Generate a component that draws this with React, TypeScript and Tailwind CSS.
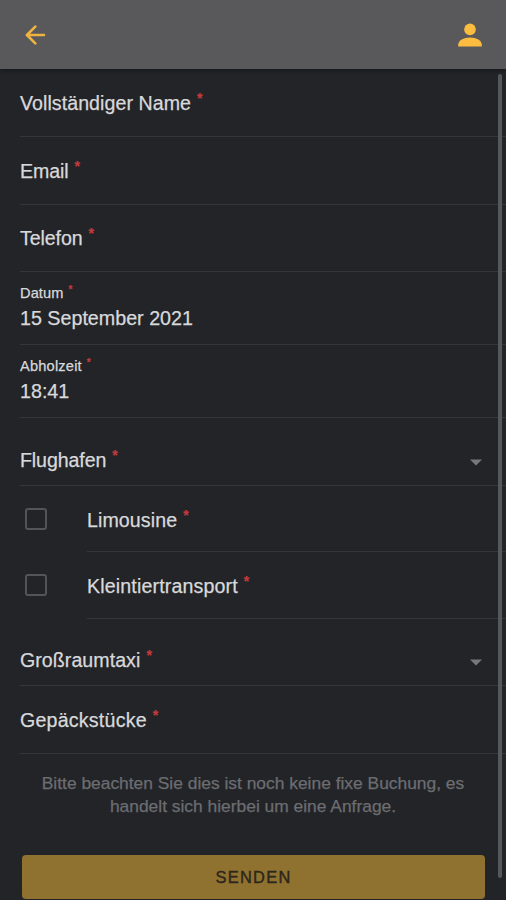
import React from 'react';
import clsx from 'clsx';

interface LabelProps {
  text: string;
  small?: boolean;
}

function Label({ text, small }: LabelProps) {
  return (
    <div className={clsx('flex whitespace-nowrap', small ? 'text-[14.6px] leading-4' : 'text-[19.6px] leading-6')}>
      {text}
      <span className={clsx('font-bold tracking-normal text-[#c23a3c]', small ? 'ml-[5px] text-[10px] leading-[10px]' : 'ml-1.5 text-[14px] leading-[15px]')}>*</span>
    </div>
  );
}

function TextRow({ label, className }: { label: string; className: string }) {
  return (
    <div className={clsx('ml-5 border-b border-[#35363a]', className)}>
      <Label text={label} />
    </div>
  );
}

function ValueRow({ label, value, className }: { label: string; value: string; className?: string }) {
  return (
    <div className="ml-5 h-[73px] border-b border-[#35363a] pt-[13px]">
      <div className={className}>
        <Label text={label} small />
      </div>
      <div className="mt-[5px] text-[19.7px] leading-6">{value}</div>
    </div>
  );
}

function SelectRow({ label, className }: { label: string; className: string }) {
  return (
    <div className={clsx('ml-5 flex justify-between border-b border-[#35363a] pr-6', className)}>
      <Label text={label} />
      <svg className="mt-[11px] h-[7px] w-3" viewBox="0 0 12 7" fill="#77787a">
        <path d="M0 .5h12l-6 6z" />
      </svg>
    </div>
  );
}

function CheckRow({ label, className }: { label: string; className: string }) {
  return (
    <div className={clsx('flex pl-[25px]', className)}>
      <div className="mt-[22px] h-[22px] w-[22px] shrink-0 rounded-[3px] border-2 border-[#535457]" />
      <div className="ml-10 flex-1 border-b border-[#35363a] pt-[22px]">
        <Label text={label} />
      </div>
    </div>
  );
}

export default function App() {
  return (
    <div className="relative flex h-[900px] w-full flex-col overflow-hidden bg-[#232428] font-['Liberation_Sans',Arial,sans-serif] text-[#d8d9db] [-webkit-text-stroke:0.25px]">
      {/* HEADER */}
      <header className="flex h-[69px] shrink-0 items-start justify-between bg-[#59595b] pr-6 pl-[25px] shadow-[0_1px_5px_rgba(0,0,0,0.45)]">
        <svg className="mt-[25px] h-5 w-[21px]" viewBox="0 0 21 20" fill="none" stroke="#efb340" strokeWidth="2.6" strokeLinecap="round" strokeLinejoin="round">
          <path d="M10.3 1.6L1.9 10l8.4 8.4M2.4 10H19" />
        </svg>
        <svg className="mt-[23px] h-6 w-6" viewBox="0 0 24 24" fill="#fbbc40">
          <circle cx="12" cy="6.4" r="5.8" />
          <path d="M.2 23.5v-1.7C.2 17.4 5.6 14.4 12 14.4s11.8 3 11.8 7.4v1.7z" />
        </svg>
      </header>

      {/* FORM */}
      <main className="flex flex-col">
        <TextRow label="Vollständiger Name" className="h-[68px] pt-[22px] tracking-[0.06px]" />
        <TextRow label="Email" className="h-[68px] pt-[22px] tracking-[-0.1px]" />
        <TextRow label="Telefon" className="h-[67px] pt-[21px] tracking-[-0.1px]" />
        <ValueRow label="Datum" value="15 September 2021" className="tracking-[0.1px]" />
        <ValueRow label="Abholzeit" value="18:41" className="tracking-[0.2px]" />
        <SelectRow label="Flughafen" className="h-[68px] pt-[30px] tracking-[-0.1px]" />
        <CheckRow label="Limousine" className="h-[66px] tracking-[0.1px]" />
        <CheckRow label="Kleintiertransport" className="h-[67px] tracking-[0.15px]" />
        <SelectRow label="Großraumtaxi" className="h-[67px] pt-[29px] tracking-[0.05px]" />
        <TextRow label="Gepäckstücke" className="h-[68px] pt-[22px] tracking-[0.22px]" />

        <p className="mt-[18px] text-center text-[17.4px] leading-[23px] text-[#6c6d71]">
          Bitte beachten Sie dies ist noch keine fixe Buchung, es
          <br />
          handelt sich hierbei um eine Anfrage.
        </p>

        <button className="mt-[37px] mr-[21px] ml-[22px] h-11 rounded-[4px] bg-[#8f7130] text-[16.4px] tracking-[1.3px] text-[#2c261b] [-webkit-text-stroke:0.4px]">
          SENDEN
        </button>
      </main>

      {/* SCROLLBAR */}
      <div className="absolute top-[74px] right-1 h-[804px] w-1 rounded-full bg-[#56575a]" />
    </div>
  );
}
